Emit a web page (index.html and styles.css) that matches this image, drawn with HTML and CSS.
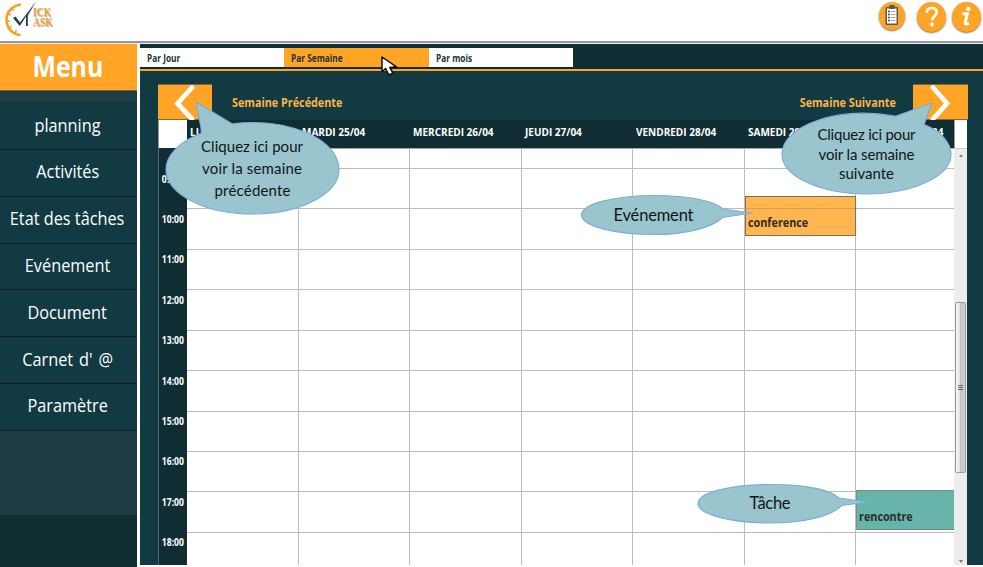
FILE: index.html
```
<!DOCTYPE html>
<html lang="fr">
<head>
<meta charset="utf-8">
<title>Planning de la semaine</title>
<link rel="stylesheet" href="styles.css">
</head>
<body>
<div class="app">
  <header class="top">
    <div class="logo">
      <svg width="34" height="38" viewBox="0 0 34 38">
        <path d="M17 3.500C9 4.500 2.500 10 2.500 19c0 8 6 14.500 14 15" fill="none" stroke="#f6a028" stroke-width="2.600"/>
        <path d="M4 13l3 1M3 20h3M5 27l3-2M11 32l1.500-3M8 7l2 2.500" stroke="#f6a028" stroke-width="1.500"/>
        <path d="M9 17l2.500-1.500 4.500 6L32 .5 23.800 14.500V25H22v-9.500L15.800 25z" fill="#1b4149"/>
      </svg>
      <div class="logo-text"><span>ICK</span><span>ASK</span></div>
    </div>
    <div class="actions">
      <span class="round small"><svg width="26" height="28" viewBox="0 0 26 28"><rect x="6.500" y="5" width="12.500" height="18" rx="1" fill="#5c5a50"/><rect x="8" y="6.500" width="9.500" height="15" fill="#fff"/><rect x="10" y="3" width="6" height="4" rx="1.500" fill="#5c5a50"/><path d="M9 9.500h2M9 12.500h2M9 15.500h2M9 18.500h2" stroke="#444" stroke-width="1.400"/><path d="M12 9.500h4.500M12 12.500h4.500M12 15.500h4.500M12 18.500h4.500" stroke="#aaa" stroke-width="1"/></svg></span>
      <span class="round help"><svg width="29" height="30" viewBox="0 0 29 30"><path d="M9.800 11C9.800 7.500 12 6 14.800 6c3 0 4.900 1.700 4.900 4.300 0 3.900-4.700 3.900-4.700 8.200" fill="none" stroke="#fff" stroke-width="2.600"/><circle cx="15" cy="22.500" r="1.900" fill="#fff"/></svg></span>
      <span class="round info"><svg width="29" height="30" viewBox="0 0 29 30"><circle cx="16.300" cy="7" r="2.200" fill="#fff"/><path d="M10.500 11.800h4.800l-2.100 8.800q-.4 2.400 3.800.8" fill="none" stroke="#fff" stroke-width="3"/></svg></span>
    </div>
  </header>
  <div class="body">
    <nav class="side">
      <div class="side-title"><b>Menu</b></div>
      <ul>
        <li><span>planning</span></li>
        <li><span>Activités</span></li>
        <li><span>Etat des tâches</span></li>
        <li><span>Evénement</span></li>
        <li><span>Document</span></li>
        <li><span class="loose">Carnet d' @</span></li>
        <li><span>Paramètre</span></li>
      </ul>
      <div class="side-foot"></div>
    </nav>
    <main class="main">
      <div class="tabs">
        <div class="tab"><span>Par Jour</span></div>
        <div class="tab active"><span>Par Semaine</span></div>
        <div class="tab"><span>Par mois</span></div>
      </div>
      <div class="content">
        <div class="weeknav">
          <div class="arrow"><svg width="54" height="36" viewBox="0 0 54 36"><path d="M34 2.500L19.500 18.500 34 34" fill="none" stroke="#fff" stroke-width="4.800" stroke-linecap="round"/></svg></div>
          <span class="week prev">Semaine Précédente</span>
          <span class="week next">Semaine Suivante</span>
          <div class="arrow wide"><svg width="54" height="36" viewBox="0 0 54 36"><path d="M20 2.500L34 18.500 20 34" fill="none" stroke="#fff" stroke-width="4.800" stroke-linecap="round"/></svg></div>
        </div>
        <div class="days">
          <div class="corner"></div>
          <div class="day"><span>LUNDI 24/04</span></div>
          <div class="day"><span>MARDI 25/04</span></div>
          <div class="day"><span>MERCREDI 26/04</span></div>
          <div class="day"><span>JEUDI 27/04</span></div>
          <div class="day"><span>VENDREDI 28/04</span></div>
          <div class="day"><span>SAMEDI 29/04</span></div>
          <div class="day"><span>DIMANCHE 30/04</span></div>
          <div class="corner"></div>
        </div>
        <div class="sched">
          <div class="hours">
            <div><span>09:00</span></div><div><span>10:00</span></div><div><span>11:00</span></div><div><span>12:00</span></div><div><span>13:00</span></div><div><span>14:00</span></div><div><span>15:00</span></div><div><span>16:00</span></div><div><span>17:00</span></div><div><span>18:00</span></div>
          </div>
          <div class="grid">
            <div class="col"></div><div class="col"></div><div class="col"></div><div class="col"></div><div class="col"></div>
            <div class="col"><div class="event conf"><b>conference</b></div></div>
            <div class="col"><div class="event task"><b>rencontre</b></div></div>
          </div>
          <div class="scroll">
            <i class="up"></i>
            <div class="thumb"><i></i><i></i><i></i></div>
            <i class="down"></i>
          </div>
        </div>
      </div>
    </main>
  </div>
  <svg class="notes" width="983" height="567" viewBox="0 0 983 567">
    <g class="bubble">
      <path d="M202 133L196 102 232 123.800C290 117 339 140 339 169.500 339 194 300 214 252.500 214S166 194 166 169.500C166 155 180 141 202 133z"/>
      <path d="M924 124.500L932 103 895.500 116.200C838 106 782 125 782 154.500 782 176 820 194 866.500 194S951 176 951 154.500C951 143 941 131 924 124.500z"/>
      <path d="M723 209L752 213 722.500 217.500C713 227 687 234.500 655 234.500 614 234.500 581.500 226 581.500 215S614 195.500 655 195.500C688 195.500 715 201 723 209z"/>
      <path d="M839 498L868 502 841.500 505.500C832 516 804 523 771 523 731 523 698 514.500 698 503.500S731 484.500 771 484.500C803 484.500 829 489 839 498z"/>
    </g>
    <g class="note">
      <text x="252" y="151.500" textLength="102">Cliquez ici pour</text>
      <text x="252" y="174" textLength="100">voir la semaine</text>
      <text x="252.500" y="196" textLength="76">précédente</text>
      <text x="866.500" y="140.400" textLength="98">Cliquez ici pour</text>
      <text x="866.500" y="160" textLength="96">voir la semaine</text>
      <text x="866.500" y="179.400" textLength="55">suivante</text>
      <text class="big" x="653.500" y="221" textLength="80">Evénement</text>
      <text class="big" x="770" y="509" textLength="41">Tâche</text>
    </g>
    <path d="M382 57V71.500L385.600 68.500 389 75 393 73 389.800 67.500 396.500 66.800z" fill="#fff" stroke="#111" stroke-width="1.500" stroke-linejoin="round"/>
  </svg>
</div>
</body>
</html>
```
FILE: styles.css
```
* { box-sizing: border-box; }
body { margin: 0; font-family: "Open Sans", "Noto Sans", sans-serif; background: #fff; }
.app { position: relative; width: 983px; height: 567px; overflow: hidden; display: flex; flex-direction: column; }

.top { height: 44px; flex: none; display: flex; justify-content: space-between; align-items: flex-start; border-bottom: 1px solid #e9e9ea; box-shadow: inset 0 -2px #98979c; }
.logo { display: flex; padding: 1px 0 0 4px; }
.logo-text { display: flex; flex-direction: column; font: bold 12px/10px "Liberation Serif", serif; color: #f2a33c; text-shadow: 1px 1px 1px #aaa; padding: 6px 0 0; margin-left: -5px; transform: scaleX(.8); transform-origin: 0 0; }
.actions { display: flex; padding: 2px 2px 0 0; }
.round { border-radius: 50%; background: #ffa425; box-shadow: 0 1px 2px #8b6a3b; width: 29px; height: 30px; }
.round svg { display: block; }
.small { width: 26px; height: 28px; margin-right: 12px; }
.help { margin-right: 6px; }

.body { flex: 1; display: flex; min-height: 0; }
.side { width: 137px; flex: none; display: flex; flex-direction: column; background: #1d3c43; }
.side-title { height: 47px; background: #ffa425; border-bottom: 1px solid #7c6130; display: flex; align-items: center; justify-content: center; color: #fff; font-size: 28px; line-height: 46px; }
.side-title b { transform: translate(-1px, -1px) scaleX(.89); }
.side ul { list-style: none; margin: 11px 0 0; padding: 0; border-top: 1px solid #142e34; }
.side li { height: 46.850px; background: #113a42; border-bottom: 1px solid #0a2126; color: #fff; font-size: 18.500px; display: flex; align-items: center; justify-content: center; white-space: nowrap; }
.side li span { transform: translate(-1px, -2px) scaleX(.88); }
.side li:first-child span { transform: translate(-1px, -1px) scaleX(.88); }
.side li .loose { word-spacing: 2px; }
.side-foot { margin-top: auto; height: 52px; background: #102d32; }

.main { flex: 1; margin: 0 0 2px 3px; padding-top: 1px; background: #113a42; display: flex; flex-direction: column; min-width: 0; }
.tabs { height: 26px; flex: none; display: flex; padding: 3px 0 2px; background: #0f2d33; border-bottom: 2px solid #ffa425; }
.tab { width: 144.300px; background: #fff; color: #1d3338; font-weight: bold; font-size: 10px; line-height: 20px; padding-left: 7px; }
.tab span { display: inline-block; transform: scaleX(.83); transform-origin: 0 50%; }
.active { background: #ffa425; }

.content { flex: 1; margin: 13px 16px 0 18px; display: flex; flex-direction: column; min-height: 0; }
.weeknav { height: 36px; flex: none; display: flex; align-items: flex-start; margin-right: -1px; }
.arrow { width: 54px; height: 36px; background: #ffa425; border: 1px solid #80673e; border-width: 1px 0; }
.wide { width: 55px; }
.week { color: #ffb344; font-weight: bold; font-size: 12px; line-height: 37px; white-space: nowrap; transform: scaleX(.9); }
.prev { margin-left: 20px; transform-origin: 0 50%; }
.next { margin-left: auto; margin-right: 17px; transform-origin: 100% 50%; }

.days { height: 28px; flex: none; display: grid; grid-template-columns: 29px repeat(6, 111.500px) 1fr 13px; background: #102d33; }
.corner { background: #fff; border-left: 1px solid #999; }
.day { color: #fff; font-weight: bold; font-size: 11px; line-height: 23px; padding-left: 3px; white-space: nowrap; overflow: hidden; }
.day span { display: inline-block; transform: scaleX(.91); transform-origin: 0 50%; }

.sched { flex: 1; display: flex; min-height: 0; }
.hours { width: 29px; flex: none; background: #102d33; border-left: 1px solid #55676a; padding-top: 19.500px; overflow: hidden; }
.hours div { height: 40.430px; color: #fff; font-weight: bold; font-size: 10px; line-height: 22px; text-align: center; }
.hours span { display: inline-block; margin-left: -1px; transform: scaleX(.86); }
.grid { flex: 1; display: grid; grid-template-columns: repeat(6, 111.500px) 1fr; background: repeating-linear-gradient(to bottom, #bcbcbc 0 1px, transparent 1px 40.430px) 0 19px / 100% 100% no-repeat #fff; border-top: 1px solid #aaa; overflow: hidden; }
.col { border-right: 1px solid #bcbcbc; min-width: 0; }
.col:last-child { border-right: 0; }
.event { height: 40px; border: 1px solid #7f7257; font-size: 12px; line-height: 15px; padding: 18px 0 0 2px; color: #2d2d2b; }
.event b { display: inline-block; transform: scaleX(.9); transform-origin: 0 50%; }
.conf { margin-top: 47px; margin-right: -1px; background: linear-gradient(to bottom, #ffb550 11px, #d99c49 11px 12px, #ffb550 12px); }
.task { margin-top: 341px; background: #67b4aa; border-color: #7d8d8a; border-right: 0; }

.scroll { width: 13px; flex: none; background: #ececec; display: flex; flex-direction: column; align-items: center; border-top: 1px solid #ccc; padding: 5px 0 2px; }
.up, .down { border: 2px solid transparent; width: 0; height: 0; }
.up { border-bottom: 3px solid #888; border-top: 0; }
.down { border-top: 3px solid #777; border-bottom: 0; margin-top: auto; }
.thumb { width: 11px; height: 171px; margin-top: 145px; border: 1px solid #999; border-radius: 2px; background: linear-gradient(to right, #f7f7f7, #e2e2e4 45%, #c3c3c8 50%, #d0d0d4); display: flex; flex-direction: column; align-items: center; justify-content: center; gap: 1px; }
.thumb i { width: 5px; height: 1px; background: #666; }

.notes { position: absolute; left: 0; top: 0; }
.bubble path { fill: #9ac5ce; stroke: #7baedb; stroke-width: 1.200; stroke-linejoin: round; }
.note text { font: 15px Lato, sans-serif; fill: #101617; text-anchor: middle; }
.note .big { font-size: 16.500px; }
```
